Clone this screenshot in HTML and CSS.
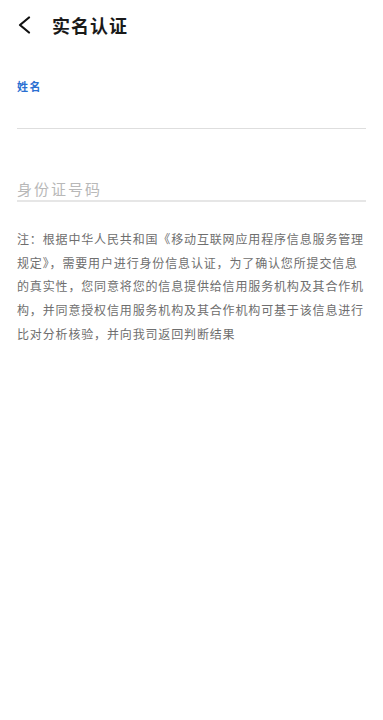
FILE: index.html
```html
<!DOCTYPE html>
<html lang="zh-CN">
<head>
  <meta charset="UTF-8" />
  <meta name="viewport" content="width=device-width, initial-scale=1.0"/>
  <title>实名认证</title>
  <link rel="stylesheet" href="styles.css">
</head>
<body>

  <header class="top-bar">
    <span class="back">
      <svg width="16" height="18" viewBox="0 0 16 18">
        <path d="M12 1.5 L3 9 L12 16.5" fill="none" stroke="#111" stroke-width="2.2" stroke-linecap="round" stroke-linejoin="round"/>
      </svg>
    </span>
    <h1>实名认证</h1>
  </header>

  <div class="form">
    <div class="field field-name">
      <label>姓名</label>
      <input type="text" value="">
    </div>

    <div class="field field-id">
      <input type="text" placeholder="身份证号码">
    </div>

    <p class="note">注：根据中华人民共和国《移动互联网应用程序信息服务管理规定》，需要用户进行身份信息认证，为了确认您所提交信息的真实性，您同意将您的信息提供给信用服务机构及其合作机构，并同意授权信用服务机构及其合作机构可基于该信息进行比对分析核验，并向我司返回判断结果</p>
  </div>

</body>
</html>
```

FILE: styles.css
```css
* {
  box-sizing: border-box;
}

body {
  margin: 0;
  padding: 0;
  background: #fff;
  font-family: "Noto Sans CJK SC", "Noto Sans", sans-serif;
  color: #222;
}

.top-bar {
  display: flex;
  align-items: center;
  height: 50px;
  padding-left: 17px;
}

.top-bar .back {
  display: flex;
  width: 35px;
}

.top-bar h1 {
  margin: 0;
  font-size: 18px;
  font-weight: 700;
  letter-spacing: 1px;
  color: #1a1a1a;
}

.form {
  padding: 0 17px;
}

.field input {
  display: block;
  width: 100%;
  border: none;
  outline: none;
  padding: 0;
  font-family: inherit;
  background: transparent;
}

.field-name {
  padding-top: 28px;
  border-bottom: 1px solid #dedede;
}

.field-name label {
  display: block;
  font-size: 11px;
  font-weight: 700;
  line-height: 16px;
  letter-spacing: 1.5px;
  color: #2a6fd2;
}

.field-name input {
  height: 34px;
  font-size: 15px;
}

.field-id {
  margin-top: 48px;
  border-bottom: 2px solid #e6e6e6;
}

.field-id input {
  height: 23px;
  font-size: 15px;
  letter-spacing: 2px;
  color: #333;
}

.field-id input::placeholder {
  color: #b8b8b8;
}

.note {
  margin: 25px 0 0;
  font-size: 12px;
  line-height: 23.7px;
  letter-spacing: 0.85px;
  color: #6e6e6e;
}
```
